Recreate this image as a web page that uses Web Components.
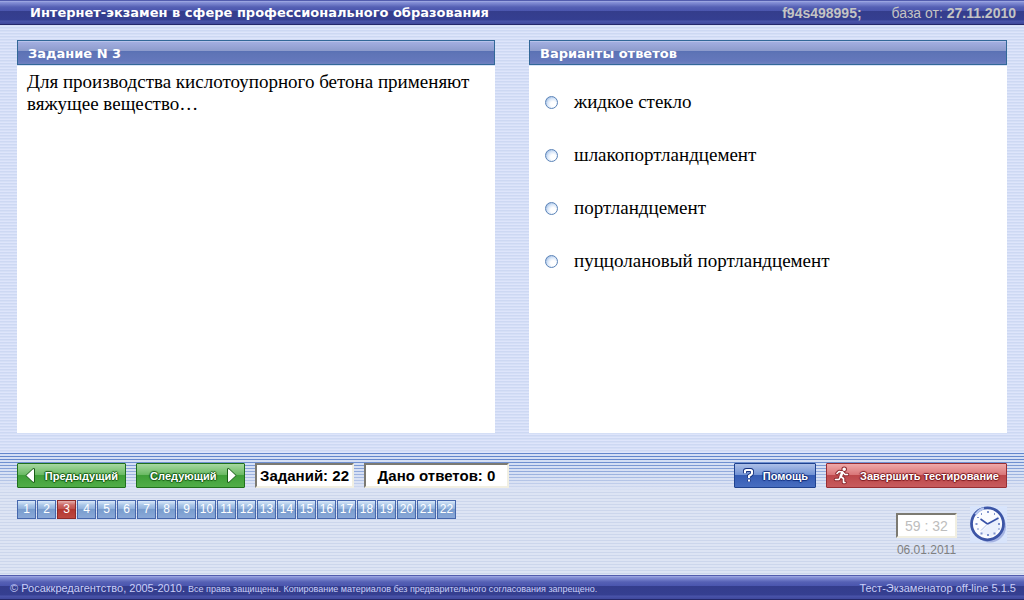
<!DOCTYPE html>
<html lang="ru">
<head>
<meta charset="utf-8">
<title>Интернет-экзамен</title>
<style>
html, body { margin: 0; }
body { font-family: "Liberation Sans", Arial, sans-serif; }
</style>
</head>
<body>
<exam-page></exam-page>
<script>
function define(name, markup, setup) {
  const tpl = document.createElement('template');
  tpl.innerHTML = markup;
  customElements.define(name, class extends HTMLElement {
    constructor() {
      super();
      this.attachShadow({ mode: 'open' }).append(tpl.content.cloneNode(true));
    }
    connectedCallback() { if (setup) setup(this, this.shadowRoot); }
  });
}

define('page-bar', `
<style>
:host { display: flex; justify-content: space-between; align-items: center; box-sizing: border-box; height: 25px; white-space: nowrap;
  background: linear-gradient(#525cae 0 1px, #9aa4e0 1px 2px, #8a95da 2px, #6b76c4 5px, #5560b4 7px, #4a55ae 11px, #343d8c 11px, #353f91 20px, #4a54aa 21px, #3f489c 24px, #24286a 24px); }
</style>
<slot></slot><slot name="end"></slot>`);

define('exam-panel', `
<style>
:host { display: flex; flex-direction: column; background: #fff; min-width: 0; }
h2 { margin: 0; box-sizing: border-box; height: 25px; padding: 0 10px; border: 1px solid #326898; color: #fff;
  font: bold 13px/25px "DejaVu Sans", sans-serif;
  background: linear-gradient(#b8c2ea 0 1px, #a3aee0 1px, #8c9bcc 10px, #5870b4 10px, #5e74b6 12px, #6478bc 20px, #6f82c0); }
.body { flex: 1; border-top: 1px solid #d9e3f8; color: #000; font: 19px/22px "Liberation Serif", "Times New Roman", serif; }
</style>
<h2><slot name="title"></slot></h2>
<div class="body"><slot></slot></div>`);

define('answer-list', `
<style>
:host { display: block; padding: 25px 16px; }
form { display: grid; gap: 31px; }
label { display: flex; align-items: center; gap: 16px; line-height: 22px; }
input { appearance: none; flex: none; box-sizing: border-box; width: 13px; height: 13px; margin: 0; border: 1px solid #5c84b8; border-radius: 50%;
  background: radial-gradient(circle at 65% 65%, #fff 25%, #d8e6f8 55%, #8eb0dc 90%); }
input:checked { background: radial-gradient(#234a94 35%, #e4eefa 40%); }
</style>
<form></form>`, (host, root) => {
  const form = root.querySelector('form');
  host.getAttribute('options').split('|').forEach(text => {
    const label = document.createElement('label');
    const input = document.createElement('input');
    const span = document.createElement('span');
    input.type = 'radio'; input.name = 'answer'; input.value = text;
    span.textContent = text;
    label.append(input, span);
    form.append(label);
  });
});

define('gloss-button', `
<style>
:host { display: block; flex: none; width: 109px; --edge: #1f701c; --a: #a7d8a1; --b: #69b962; --c: #3e9f38; --d: #50ad48; --ink: #175c15; }
:host([kind=help]) { width: 82px; --edge: #1f428f; --a: #adc0e8; --b: #7192d4; --c: #355cb4; --d: #476dc0; --ink: #122e7c; }
:host([kind=end]) { width: 181px; --edge: #972e33; --a: #efa9a9; --b: #d97577; --c: #bd474a; --d: #c75b5d; --ink: #7c1c22; }
button { box-sizing: border-box; width: 100%; height: 25px; display: flex; align-items: center; justify-content: space-between; padding: 0 7px; margin: 0;
  border: 1px solid var(--edge); border-radius: 1px; color: #fff; white-space: nowrap;
  font: bold 11px/22px "Liberation Sans", Arial, sans-serif;
  text-shadow: 1px 0 1px var(--ink), -1px 0 1px var(--ink), 0 1px 1px var(--ink), 0 -1px 1px var(--ink);
  background: linear-gradient(var(--a), var(--b) 11px, var(--c) 11px, var(--d)); }
</style>
<button type="button"><slot name="before"></slot><slot></slot><slot name="after"></slot></button>`);

define('glyph-icon', `
<style>:host { display: block; line-height: 0; } svg { display: block; overflow: visible; }</style>`, (host, root) => {
  const art = {
    prev: '<svg width="10" height="15" viewBox="0 0 10 15"><path d="M9.500 .7v13.600H8L.8 7.500 8 .7z" fill="#fff" stroke="#175c15"/></svg>',
    next: '<svg width="10" height="15" viewBox="0 0 10 15"><path d="M.5.7v13.600H2L9.200 7.500 2 .7z" fill="#fff" stroke="#175c15"/></svg>',
    help: '<svg width="14" height="15" viewBox="0 0 14 15" fill="none" stroke-linejoin="round"><path d="M3 5.200V3.200Q3 2 4.500 2h4Q10 2 10 3.500v1.500Q10 6 9 6.700L7 8v2M7 11.500v2" stroke="#122e7c" stroke-width="4"/><path d="M3 5.200V3.200Q3 2 4.500 2h4Q10 2 10 3.500v1.500Q10 6 9 6.700L7 8v2M7 11.500v2" stroke="#fff" stroke-width="2.200"/></svg>',
    run: '<svg width="15" height="17" viewBox="0 0 15 17" fill="none" stroke-linecap="round" stroke-linejoin="round"><g stroke="#8e2b30" stroke-width="3.600"><circle cx="10.200" cy="2.300" r="1"/><path d="M3 6.500 5 4.500 8.500 5 11 7.500H13.500M8.500 5 6.500 9.500 9.500 11.500V15.500H11M6.500 9.500 5 12.500H1.500"/></g><g stroke="#fff" stroke-width="1.600"><circle cx="10.200" cy="2.300" r="1" fill="#fff"/><path d="M3 6.500 5 4.500 8.500 5 11 7.500H13.500M6.500 9.500 9.500 11.500V15.500H11M6.500 9.500 5 12.500H1.500"/><path d="M8.300 5.500 6.800 9.300" stroke-width="2.600"/></g></svg>',
    clock: '<svg width="37" height="37" viewBox="0 0 37 37"><rect width="37" height="37" fill="#d8e4fb"/><circle cx="20" cy="20.500" r="16" fill="#a5b3e2"/><circle cx="17.500" cy="17.800" r="16" fill="#fbfcff" stroke="#3c55a6" stroke-width="2.800"/><path d="M5.500 8.500Q9 3.500 14 2.300" stroke="#b5c6ef" stroke-width="2.400" fill="none"/><path d="M10 27 28 9.500 31 22 21 31z" fill="#eaf0fd"/><path d="M10.500 13 17.500 18 28.500 12" fill="none" stroke="#3852a8" stroke-width="1.600"/><path d="M17.500 18 11 24.500" stroke="#b0bfe6" stroke-width="1"/><g fill="#4d68b6"><path d="M17 5h2v2h-2zM17 28h2v2h-2zM5.500 17h2v2h-2zM28 17h2v2h-2zM24 7h1v2h-1zM28 22.500h2v1h-2zM23.500 26.500h2v2h-2zM10.500 26.500h2v2h-2zM7 22.500h2v1H7zM7 11h2v1H7zM11 7h1v2h-1z" opacity=".7"/></g></svg>'
  };
  root.querySelector('style').insertAdjacentHTML('afterend', art[host.getAttribute('name')]);
});

define('info-field', `
<style>
:host { display: block; flex: none; }
input { display: block; box-sizing: border-box; width: 100%; height: 25px; margin: 0; padding: 0; text-align: center; background: #fff; color: #000;
  border: 2px solid; border-color: #7c7a72 #f1efe2 #f1efe2 #7c7a72; border-radius: 0;
  font: bold 15px/20px "Liberation Sans", Arial, sans-serif; }
input:disabled { color: #bdbdbd; font-size: 14px; font-weight: normal; }
</style>
<input readonly>`, (host, root) => {
  const input = root.querySelector('input');
  input.value = host.getAttribute('value');
  input.setAttribute('value', input.value);
  input.setAttribute('aria-label', host.getAttribute('label'));
  input.disabled = host.hasAttribute('disabled');
});

define('task-pager', `
<style>
nav { display: flex; flex-wrap: wrap; gap: 1px; }
button { box-sizing: border-box; width: 19px; height: 19px; margin: 0; padding: 0; border: 1px solid #4667ac; color: #fff;
  font: 12px/17px "Liberation Sans", Arial, sans-serif;
  background: linear-gradient(#dbeafa, #a9c6e8 4px, #8fb0dc 8px, #789ccd 8px, #8aa8d8); }
button[aria-current] { border-color: #8e2a28; background: linear-gradient(#e6b0ae, #cc6864 4px, #c0514c 8px, #b2362f 8px, #bd4840); }
</style>
<nav aria-label="Задания"></nav>`, (host, root) => {
  const nav = root.querySelector('nav');
  for (let i = 1; i <= +host.getAttribute('total'); i++) {
    const b = document.createElement('button');
    b.type = 'button'; b.textContent = i;
    if (i === +host.getAttribute('current')) b.setAttribute('aria-current', 'true');
    nav.append(b);
  }
});

define('exam-timer', `
<style>
:host { display: flex; gap: 13px; align-items: flex-start; }
.read { width: 61px; padding-top: 7px; }
info-field { width: 61px; }
time { display: block; text-align: center; margin-top: 4px; font-size: 12px; line-height: 16px; color: #808080; }
</style>
<div class="read"><info-field label="Оставшееся время" value="59 : 32" disabled></info-field><time datetime="2011-01-06">06.01.2011</time></div>
<glyph-icon name="clock"></glyph-icon>`);

define('exam-page', `
<style>
:host { display: flex; flex-direction: column; min-height: 100vh; background: repeating-linear-gradient(#cdd8f3 0 1px, #d5dff6 1px 2px, #dee5fb 2px 3px); }
h1 { margin: 0; padding-left: 30px; color: #fff; font: bold 13px/25px "DejaVu Sans", sans-serif; }
.meta { display: flex; gap: 30px; padding-right: 8px; color: #c4c4c4; font-size: 14px; }
main { flex: 1; display: grid; grid-template-columns: 1fr 1fr; gap: 34px; padding: 15px 17px 20px; }
.question { margin: 0; padding: 5px 10px; }
.controls { padding: 10px 17px 17px;
  background: linear-gradient(#dce3f400, #dce3f400 6px, #dce3f4 38px) top / 100% 38px no-repeat, repeating-linear-gradient(#6286cc 0 1px, #d3def4 1px 3px) top / 100% 38px no-repeat, repeating-linear-gradient(#ccd6ec 0 1px, #dde4f4 1px 3px); }
.row { display: flex; gap: 10px; }
.row .push { margin-left: auto; }
.count { width: 99px; } .given { width: 145px; }
.low { display: flex; justify-content: space-between; align-items: flex-start; padding-top: 12px; }
exam-timer { margin-top: 6px; }
.copy { padding-left: 10px; color: #c9cef8; font-size: 11px; }
.copy small { font-size: 9px; }
.ver { padding-right: 8px; color: #c9cef8; font-size: 11px; }
</style>
<header><page-bar><h1>Интернет-экзамен в сфере профессионального образования</h1>
<div slot="end" class="meta"><b>f94s498995;</b><span>база от: <b>27.11.2010</b></span></div></page-bar></header>
<main>
<exam-panel><span slot="title">Задание N 3</span><p class="question">Для производства кислотоупорного бетона применяют вяжущее вещество…</p></exam-panel>
<exam-panel><span slot="title">Варианты ответов</span><answer-list options="жидкое стекло|шлакопортландцемент|портландцемент|пуццолановый портландцемент"></answer-list></exam-panel>
</main>
<section class="controls">
<div class="row">
<gloss-button><glyph-icon slot="before" name="prev"></glyph-icon>Предыдущий</gloss-button>
<gloss-button>&nbsp; Следующий<glyph-icon slot="after" name="next"></glyph-icon></gloss-button>
<info-field class="count" label="Всего заданий" value="Заданий: 22"></info-field>
<info-field class="given" label="Дано ответов" value="Дано ответов: 0"></info-field>
<gloss-button class="push" kind="help"><glyph-icon slot="before" name="help"></glyph-icon>Помощь</gloss-button>
<gloss-button kind="end"><glyph-icon slot="before" name="run"></glyph-icon>Завершить тестирование</gloss-button>
</div>
<div class="low"><task-pager total="22" current="3"></task-pager><exam-timer></exam-timer></div>
</section>
<footer><page-bar><div class="copy">© Росаккредагентство, 2005-2010. <small>Все права защищены. Копирование материалов без предварительного согласования запрещено.</small></div><div slot="end" class="ver">Тест-Экзаменатор off-line 5.1.5</div></page-bar></footer>`);
</script>
</body>
</html>
